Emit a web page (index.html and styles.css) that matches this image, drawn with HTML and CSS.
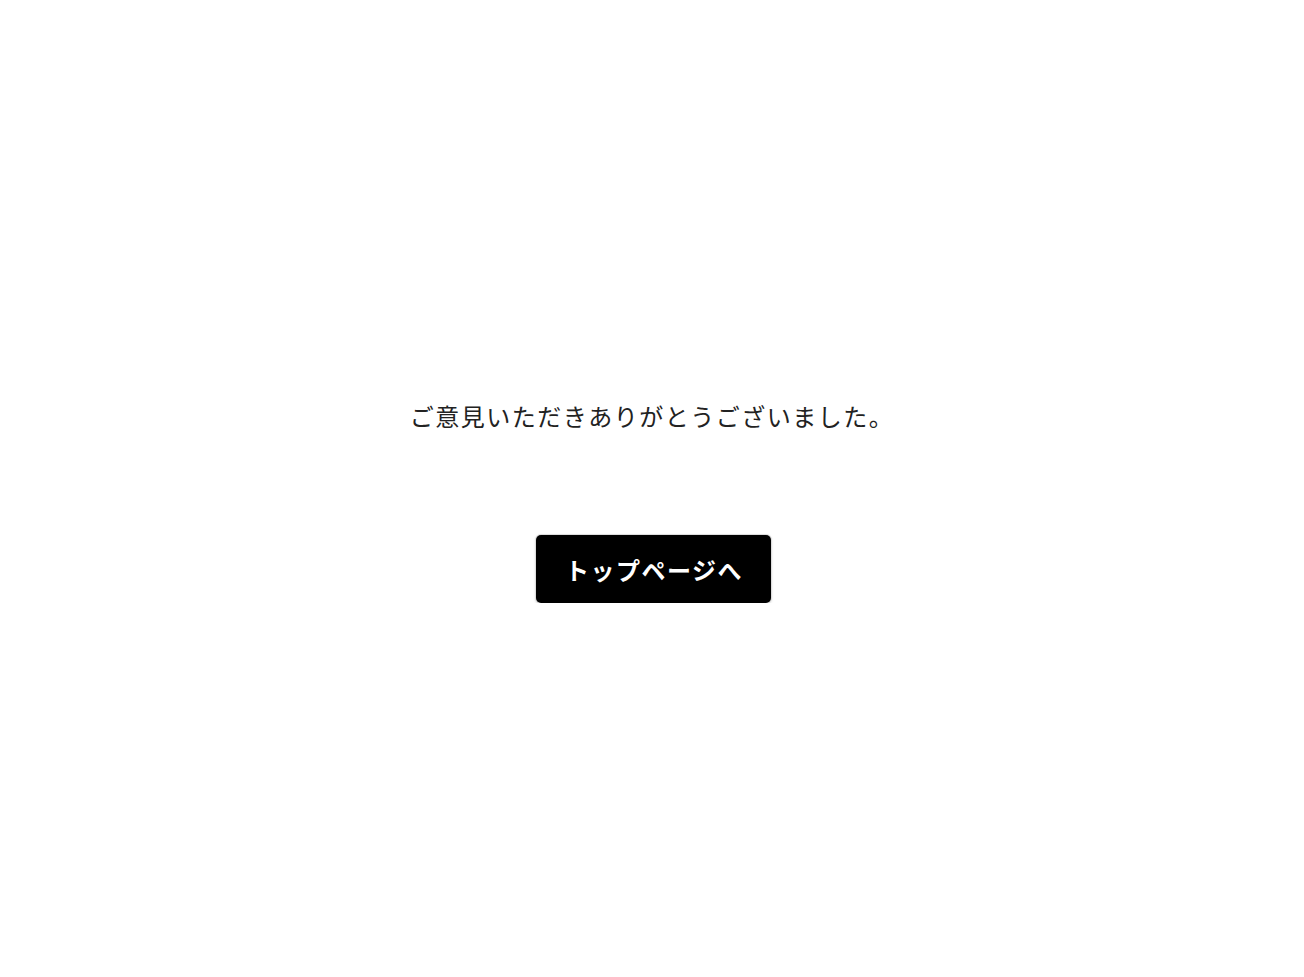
FILE: index.html
```html
<!DOCTYPE html>
<html lang="ja">
<head>
<meta charset="utf-8">
<title>送信完了</title>
<link rel="stylesheet" href="styles.css">
</head>
<body>
<main class="page">
  <p class="message">ご意見いただきありがとうございました。</p>
  <a class="btn" href="#">トップページへ</a>
</main>
</body>
</html>
```

FILE: styles.css
```css
html, body {
  margin: 0;
  padding: 0;
  background: #fff;
}
body {
  font-family: "Noto Sans CJK JP", "Noto Sans", sans-serif;
  color: #222;
}
.page {
  display: flex;
  flex-direction: column;
  align-items: center;
  padding-top: 398px;
}
.message {
  margin: 0;
  font-size: 24px;
  line-height: 36px;
  letter-spacing: 1.5px;
  color: #222;
}
.btn {
  margin-top: 101px;
  margin-left: 2px;
  display: flex;
  align-items: center;
  justify-content: center;
  width: 235px;
  height: 68px;
  box-sizing: border-box;
  padding-left: 2px;
  background: #000;
  color: #fff;
  font-size: 24px;
  font-weight: 700;
  letter-spacing: 1.5px;
  text-decoration: none;
  border-radius: 5px;
  box-shadow: 0 0 0 1px #ddd, 0 1px 3px rgba(0,0,0,0.25);
}
```
